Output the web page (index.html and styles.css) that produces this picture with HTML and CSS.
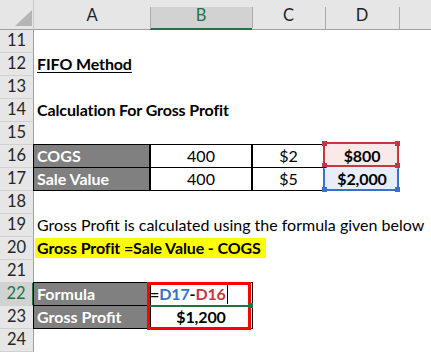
FILE: index.html
```html
<!DOCTYPE html>
<html>
<head>
<meta charset="utf-8">
<link rel="stylesheet" href="styles.css">
</head>
<body>
<div class="sheet">
  <div class="corner"><div class="tri"></div></div>
  <div class="ch">A</div>
  <div class="ch sel">B</div>
  <div class="ch">C</div>
  <div class="ch">D</div>
  <div class="ch last"></div>

  <div class="rh">11</div><div class="c span"></div>
  <div class="rh">12</div><div class="c span"><span class="b u">FIFO Method</span></div>
  <div class="rh">13</div><div class="c span"></div>
  <div class="rh">14</div><div class="c span"><span class="b">Calculation For Gross Profit</span></div>
  <div class="rh">15</div><div class="c span"></div>

  <div class="rh">16</div>
  <div class="c bx lbl">COGS</div>
  <div class="c bx ctr">400</div>
  <div class="c bx ctr">$2</div>
  <div class="c ctr b ref-red">$800<span class="ovl ovl-red"><i class="h tl"></i><i class="h tr"></i><i class="h bl"></i><i class="h br"></i></span></div>
  <div class="c"></div>

  <div class="rh">17</div>
  <div class="c bx lbl">Sale Value</div>
  <div class="c bx ctr">400</div>
  <div class="c bx ctr">$5</div>
  <div class="c ctr b ref-blue">$2,000<span class="ovl ovl-blue"><i class="h bl"></i><i class="h br"></i></span></div>
  <div class="c"></div>

  <div class="rh">18</div><div class="c span"></div>
  <div class="rh">19</div><div class="c span reg">Gross Profit is calculated using the formula given below</div>
  <div class="rh">20</div><div class="c span"><span class="b hl">Gross Profit =Sale Value - COGS</span></div>
  <div class="rh">21</div><div class="c span"></div>

  <div class="rh rsel">22</div>
  <div class="c bx lbl">Formula</div>
  <div class="c bx edit b"><span class="eq">=</span><span class="rb">D17</span><span class="eq">-</span><span class="rr">D16</span><span class="caret"></span><span class="redbox"></span><span class="gline"></span><span class="ghandle"></span></div>
  <div class="c"></div>
  <div class="c"></div>
  <div class="c"></div>

  <div class="rh">23</div>
  <div class="c bx lbl">Gross Profit</div>
  <div class="c bx ctr b">$1,200</div>
  <div class="c"></div>
  <div class="c"></div>
  <div class="c"></div>

  <div class="rh">24</div><div class="c span"></div>
</div>
</body>
</html>
```

FILE: styles.css
```css
html, body {
  margin: 0;
  padding: 0;
  background: #ffffff;
}

.sheet {
  display: grid;
  grid-template-columns: 34px 116px 102px 73px 74px 1fr;
  grid-template-rows: 30px repeat(14, 23px);
  width: 431px;
  height: 353px;
  overflow: hidden;
  font-family: Lato, "Open Sans", sans-serif;
  font-size: 16px;
  color: #000;
}

.corner {
  position: relative;
  background: #e6e6e6;
  border-right: 1px solid #c9c9c9;
  border-bottom: 1px solid #a0a0a0;
}

.tri {
  position: absolute;
  left: 15px;
  top: 10px;
  width: 17px;
  height: 16px;
  background: #b5b5b5;
  clip-path: polygon(100% 0, 100% 100%, 0 100%);
}

.ch {
  position: relative;
  background: #e6e6e6;
  border-bottom: 1px solid #a0a0a0;
  text-align: center;
  line-height: 31px;
  color: #1f1f1f;
  font-size: 16.5px;
}

.ch::after {
  content: "";
  position: absolute;
  right: -1px;
  top: 7px;
  bottom: 0;
  width: 1px;
  background: #ababab;
  z-index: 1;
}

.ch.last::after {
  display: none;
}

.ch.sel {
  background: linear-gradient(#e6e6e6 0 7px, #d2d2d2 7px);
  border-bottom: 2px solid #217346;
  color: #217346;
  line-height: 30px;
}

.rh {
  background: #e6e6e6;
  border-right: 1px solid #9f9f9f;
  border-bottom: 1px solid #d1d1d1;
  text-align: center;
  line-height: 21px;
  color: #262626;
  font-size: 16.5px;
}

.rh.rsel {
  background: #d2d2d2;
  border-right: 2px solid #217346;
  color: #217346;
}

.c {
  position: relative;
  line-height: 21px;
  padding: 0 3px;
  white-space: nowrap;
  min-width: 0;
}

.span {
  grid-column: 2 / -1;
}

.reg {
  letter-spacing: 0;
}

.b {
  font-weight: 700;
  letter-spacing: -0.12px;
}

.u {
  text-decoration: underline;
  text-underline-offset: 2px;
}

.bx {
  border: 1px solid #000;
  margin: -1px -1px 0 -1px;
}

.lbl {
  background: #808080;
  color: #ffffff;
  font-weight: 700;
  padding-left: 3px;
}

.ctr {
  text-align: center;
}

.ref-red {
  background: #fbe8e8;
  margin-top: -1px;
  line-height: 23px;
}

.ref-blue {
  background: #e7eef9;
}

.ovl {
  position: absolute;
  box-sizing: border-box;
  left: -2px;
  width: 76px;
}

.ovl-red {
  top: -2px;
  height: 25px;
  border: 2px solid #c8373f;
}

.ovl-blue {
  top: -1px;
  height: 24px;
  border: 2px solid #3a70c9;
  border-top-color: transparent;
}

.h {
  position: absolute;
  width: 5px;
  height: 5px;
}

.ovl-red .h { background: #c8373f; }
.ovl-blue .h { background: #3a70c9; }

.h.tl { left: -3px; top: -3px; }
.h.tr { right: -3px; top: -3px; }
.h.bl { left: -3px; bottom: -3px; }
.h.br { right: -3px; bottom: -3px; }

.hl {
  display: inline-block;
  background: #ffff00;
  margin-left: -2px;
  padding: 0 5px 0 2px;
  line-height: 20px;
}

.edit {
  padding-left: 0;
}

.eq { color: #000; }
.rb { color: #3a70c9; }
.rr { color: #c8373f; }

.caret {
  display: inline-block;
  width: 1px;
  height: 20px;
  background: #000;
  margin-left: 1px;
  vertical-align: -4px;
}

.redbox {
  position: absolute;
  box-sizing: border-box;
  left: -3px;
  top: -1px;
  width: 104px;
  height: 48px;
  border: 3px solid #ff0000;
  z-index: 3;
}

.gline {
  position: absolute;
  left: 0;
  top: 22px;
  width: 98px;
  height: 2px;
  background: #217346;
  z-index: 2;
}

.ghandle {
  position: absolute;
  left: 98px;
  top: 20px;
  width: 5px;
  height: 5px;
  background: #217346;
  z-index: 4;
}
```
